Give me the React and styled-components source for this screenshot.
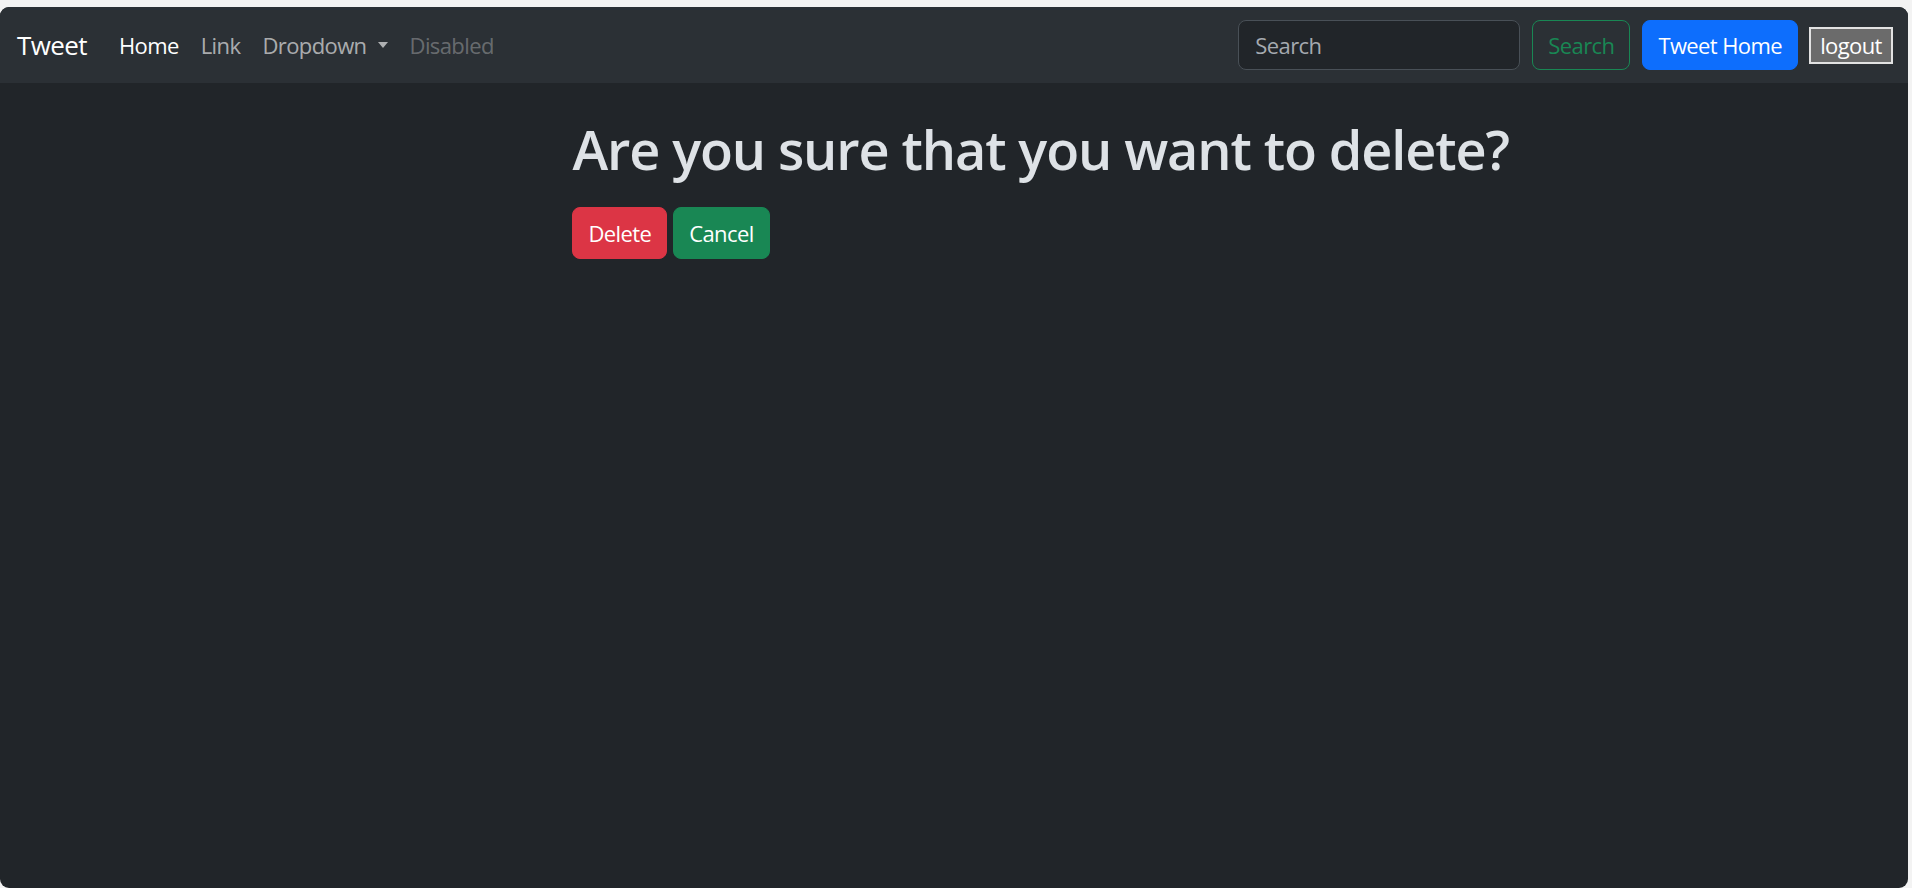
import React from 'react';
import styled, { createGlobalStyle } from 'styled-components';

const GlobalStyle = createGlobalStyle`
  html, body {
    margin: 0;
    padding: 0;
    height: 100%;
    background: #f3f3f3;
    font-family: "Open Sans", "Liberation Sans", sans-serif;
  }
  #root {
    height: 100%;
  }
`;

const Window = styled.div`
  margin: 7px 4px 0 0;
  height: calc(100% - 7px);
  background: #212529;
  border-radius: 9px;
  overflow: hidden;
  display: flex;
  flex-direction: column;
  letter-spacing: -0.6px;
`;

const NavBar = styled.nav`
  height: 76px;
  flex-shrink: 0;
  background: #2b3035;
  display: flex;
  align-items: center;
  padding: 0 15px 0 17px;
`;

const Brand = styled.a`
  color: #fff;
  font-size: 26px;
  margin-right: 21px;
  text-decoration: none;
`;

const NavList = styled.ul`
  display: flex;
  align-items: center;
  list-style: none;
  margin: 0;
  padding: 0;
  flex: 1;
`;

const NavLink = styled.a`
  display: flex;
  align-items: center;
  padding: 0 11px;
  font-size: 22px;
  text-decoration: none;
  color: ${p => (p.$active ? '#fff' : p.$disabled ? 'rgba(255,255,255,0.3)' : 'rgba(255,255,255,0.62)')};
`;

const Caret = styled.span`
  display: inline-block;
  margin-left: 11px;
  border-top: 6px solid rgba(255,255,255,0.62);
  border-left: 5.5px solid transparent;
  border-right: 5.5px solid transparent;
`;

const SearchForm = styled.form`
  display: flex;
  align-items: center;
  gap: 12px;
`;

const SearchInput = styled.input`
  width: 282px;
  height: 50px;
  box-sizing: border-box;
  padding: 0 16px;
  background: #212529;
  border: 1px solid #495057;
  border-radius: 8px;
  color: #dee2e6;
  font-family: inherit;
  letter-spacing: inherit;
  font-size: 22px;
  &::placeholder {
    color: #a5aab0;
  }
`;

const Btn = styled.button`
  height: ${p => (p.$tall ? '52px' : '50px')};
  box-sizing: border-box;
  padding: 0 15px;
  border-radius: 8px;
  font-family: inherit;
  letter-spacing: inherit;
  font-size: 22px;
  cursor: pointer;
  border: 1px solid ${p => p.$color};
  background: ${p => (p.$outline ? 'transparent' : p.$color)};
  color: ${p => (p.$outline ? p.$color : '#fff')};
`;

const LogoutBtn = styled.button`
  height: 37px;
  width: 84px;
  margin-left: 11px;
  box-sizing: border-box;
  padding: 0;
  background: #6b6b6b;
  border: 2px solid #e2e2e2;
  border-radius: 0;
  color: #fff;
  font-family: inherit;
  letter-spacing: inherit;
  font-size: 22px;
`;

const Main = styled.main`
  margin-left: 30%;
  padding-top: 34px;
`;

const Heading = styled.h1`
  margin: 0 0 25px;
  color: #dee2e6;
  font-size: 54px;
  font-weight: 600;
  letter-spacing: -1.1px;
  line-height: 1.2;
`;

const Actions = styled.div`
  display: flex;
  gap: 6px;
`;

export default function App() {
  return (
    <>
      <GlobalStyle />
      <Window>
        <NavBar>
          <Brand href="#">Tweet</Brand>
          <NavList>
            <li><NavLink href="#" $active>Home</NavLink></li>
            <li><NavLink href="#">Link</NavLink></li>
            <li><NavLink href="#">Dropdown<Caret /></NavLink></li>
            <li><NavLink $disabled>Disabled</NavLink></li>
          </NavList>
          <SearchForm onSubmit={e => e.preventDefault()}>
            <SearchInput type="search" placeholder="Search" />
            <Btn $outline $color="#198754">Search</Btn>
            <Btn $color="#0d6efd" type="button">Tweet Home</Btn>
          </SearchForm>
          <LogoutBtn>logout</LogoutBtn>
        </NavBar>
        <Main>
          <Heading>Are you sure that you want to delete?</Heading>
          <Actions>
            <Btn $tall $color="#dc3545">Delete</Btn>
            <Btn $tall $color="#198754">Cancel</Btn>
          </Actions>
        </Main>
      </Window>
    </>
  );
}
